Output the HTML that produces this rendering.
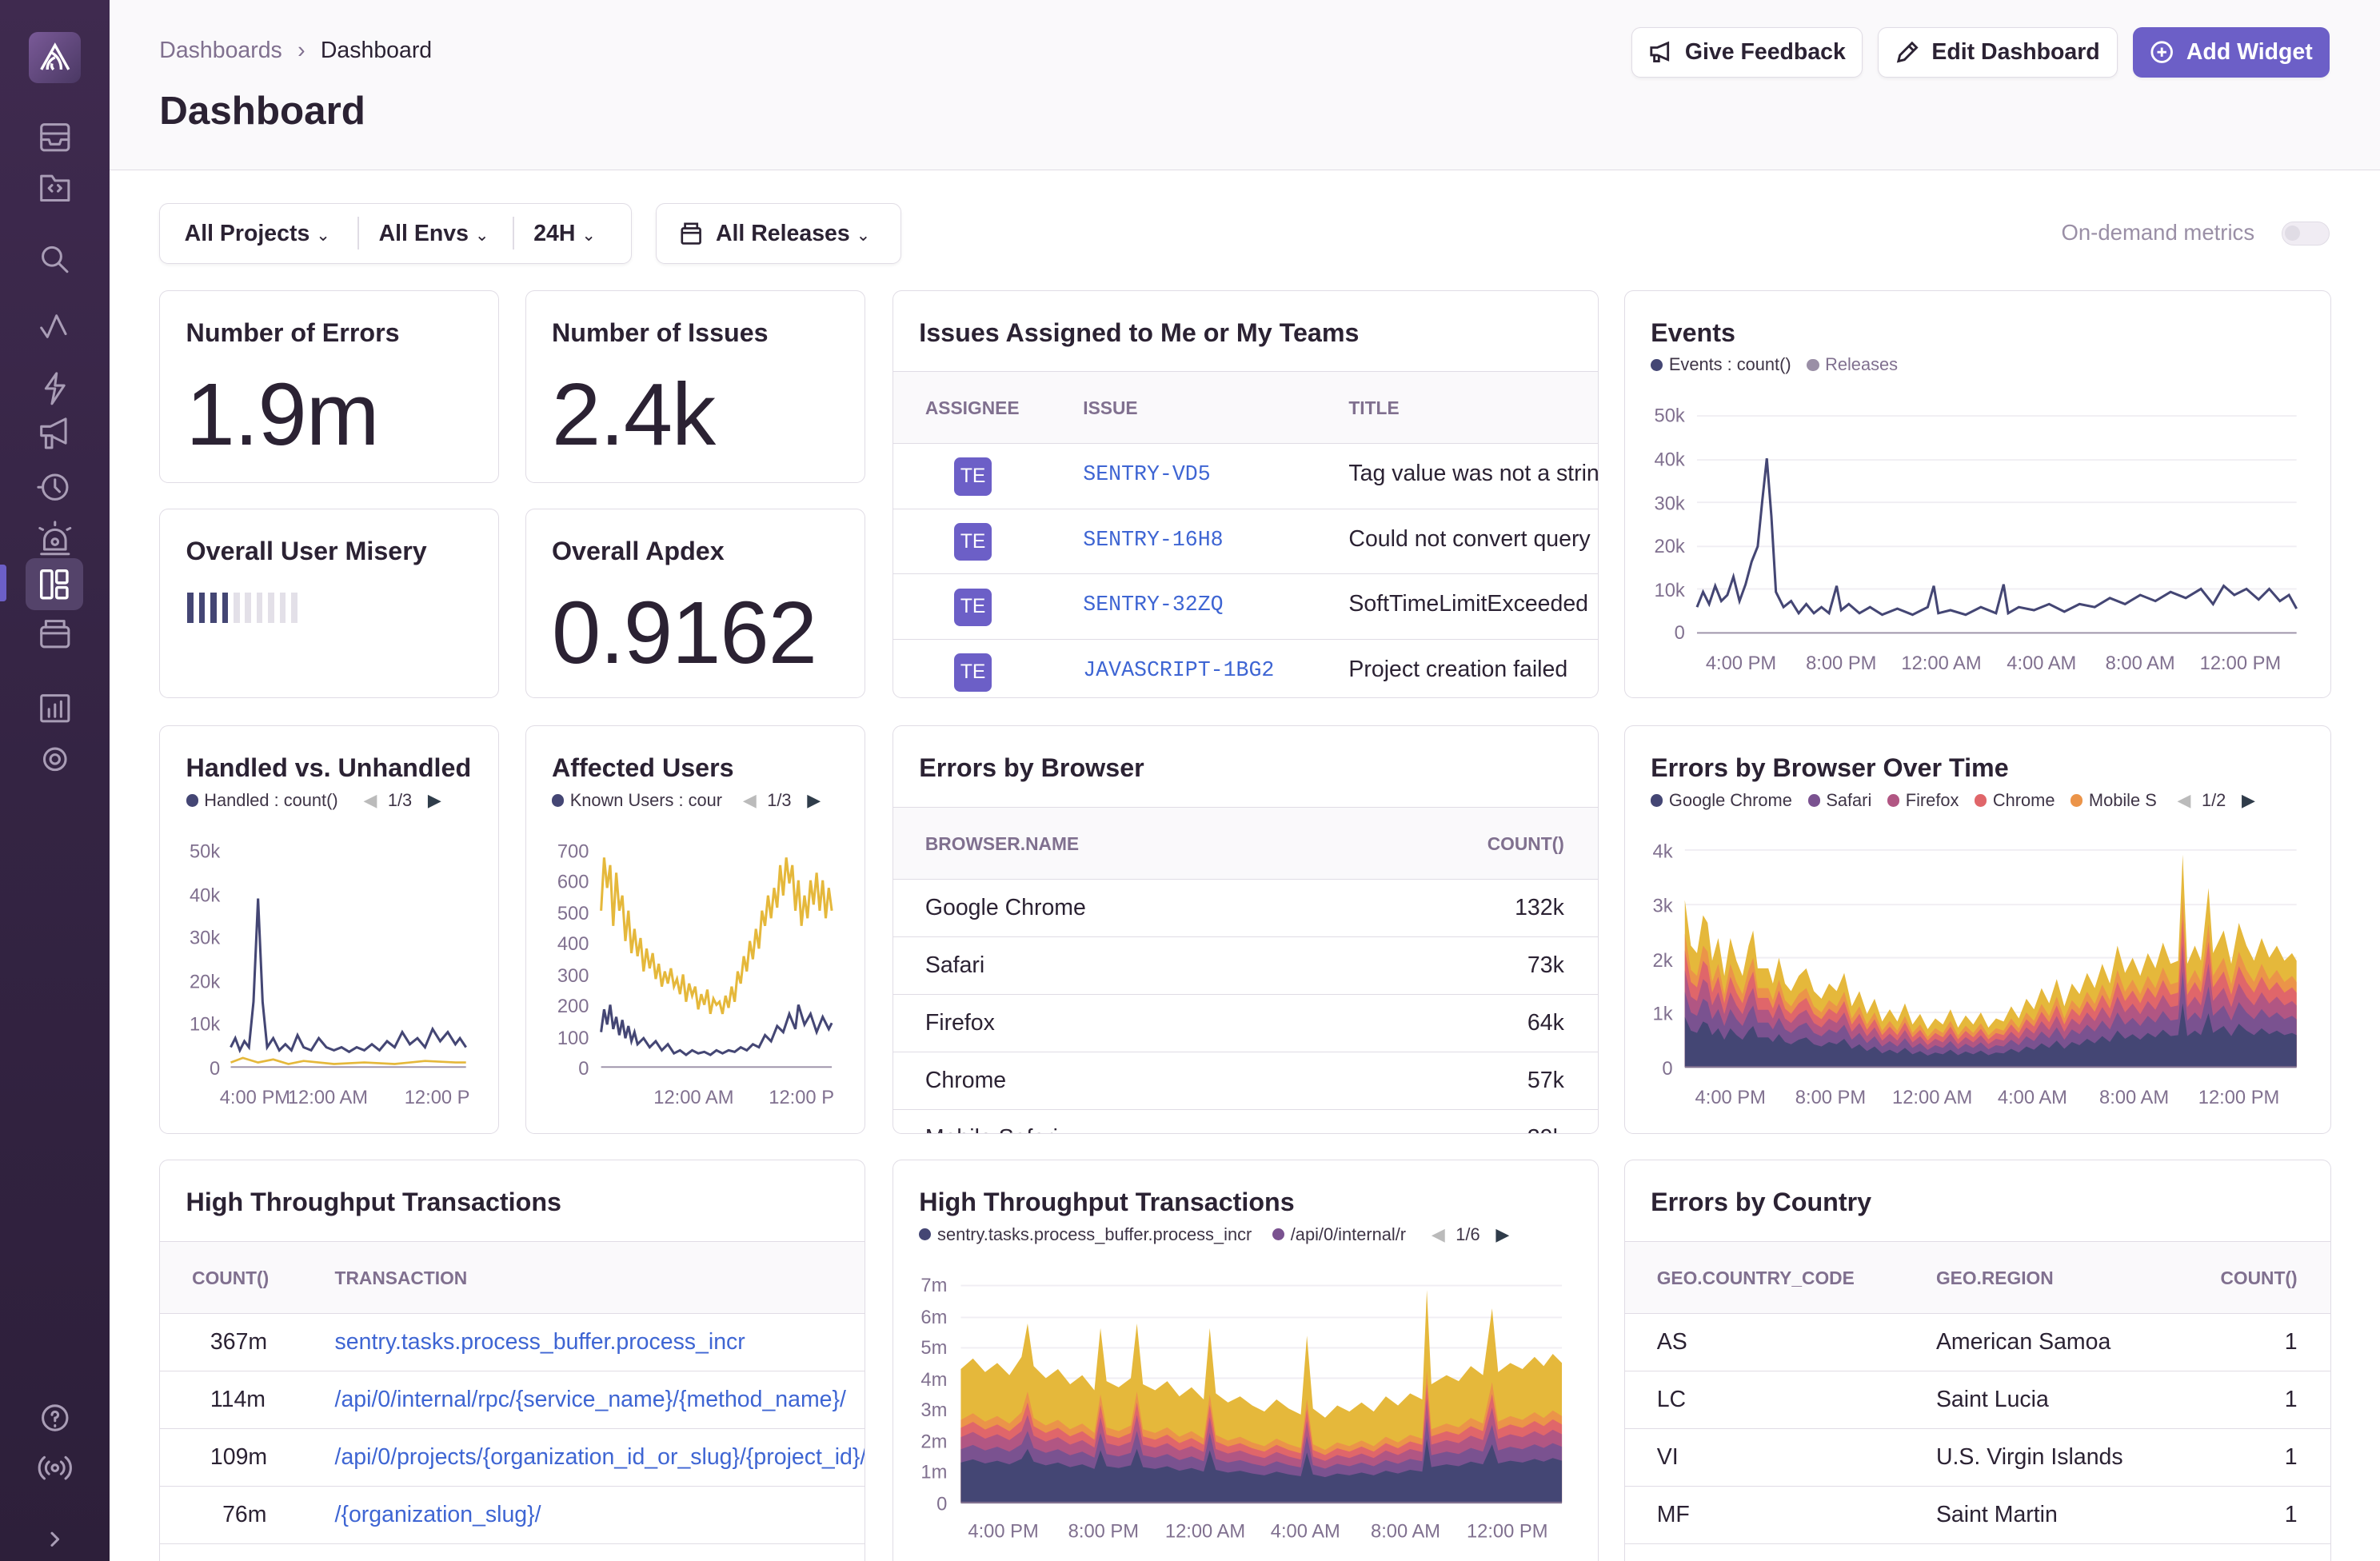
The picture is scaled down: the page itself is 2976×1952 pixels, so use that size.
<!DOCTYPE html>
<html><head><meta charset="utf-8">
<style>
*{box-sizing:border-box;margin:0;padding:0}
html,body{width:2976px;height:1952px;overflow:hidden;background:#fff}
#z{zoom:1.898;width:1568px;height:1029px;position:relative;font-family:"Liberation Sans",sans-serif;color:#2b2233;overflow:hidden}
.a{position:absolute}
.side{left:0;top:0;width:72px;height:1029px;background:linear-gradient(180deg,#3f2a4f 0%,#342443 50%,#2d1f3a 100%)}
.hdr{left:72px;top:0;width:1496px;height:112px;background:#faf9fb;border-bottom:1px solid #e0dce5}
.btn{top:18px;height:33px;border:1px solid #e0dce5;border-radius:6px;background:#fff;font-size:15px;font-weight:bold;display:flex;align-items:center;justify-content:center;gap:8px;color:#2b2233;box-shadow:0 1px 2px rgba(0,0,0,.05)}
.card{border:1px solid #e0dce5;border-radius:6px;background:#fff;overflow:hidden}
.t{font-size:17px;font-weight:bold;position:absolute;left:17px;top:18px;white-space:nowrap}
.big{position:absolute;left:17px;font-size:58px;letter-spacing:-0.5px}
.th{position:absolute;left:0;right:0;background:#faf9fb;border-top:1px solid #e0dce5;border-bottom:1px solid #e0dce5;font-size:12px;font-weight:bold;color:#80708f}
.th span,.row span{position:absolute;white-space:nowrap}
.row{position:absolute;left:0;right:0;border-bottom:1px solid #e0dce5;font-size:15px}
.te{width:25px;height:25px;background:#6c5fc7;color:#fff;border-radius:4px;font-size:13px;display:flex;align-items:center;justify-content:center}
.mono{font-family:"Liberation Mono",monospace;color:#3e65d3;font-size:14px}
.lnk{color:#3e65d3}
.lg{position:absolute;font-size:11.5px;color:#3e3446;white-space:nowrap;display:flex;align-items:center;gap:4px}
.dot{width:8px;height:8px;border-radius:50%;display:inline-block}
.ax{font-size:12.5px;fill:#80708f;font-family:"Liberation Sans",sans-serif}
.r{text-align:right}
</style></head><body><div id="z">

<div class="a side">
 <div class="a" style="left:19px;top:21px;width:34px;height:34px;border-radius:6px;background:linear-gradient(135deg,#7a5a98,#4a3863)"></div>
 <svg class="a" style="left:24px;top:26px" width="24" height="24" viewBox="0 0 24 24" fill="none" stroke="#fff" stroke-width="1.8"><path d="M3 20 L12 4 L21 20 M7 20 A8 8 0 0 1 12 12 M11 20 A4 4 0 0 1 10 16 M16 20 A12 12 0 0 0 10 9"/></svg>
 <svg class="a" style="left:24px;top:78px" width="24" height="460" viewBox="0 0 24 460" fill="none" stroke="#a99db6" stroke-width="1.6" stroke-linecap="round" stroke-linejoin="round">
  <rect x="3" y="4" width="18" height="17" rx="2"/><path d="M3 10h18M3 14h5l1 3h6l1-3h5"/>
  <path d="M3 38v16h18V41h-9l-2-3z"/><path d="M10 44l-2 2 2 2M14 44l2 2-2 2"/>
  <circle cx="10" cy="91" r="6"/><path d="M14.5 95.5L20 101"/>
  <path d="M3 138l4 6 6-14 6 12"/>
  <path d="M13 168l-7 10h6l-2 10 8-12h-6z"/>
  <path d="M3 203h6l10-5v16l-10-5H3zM6 209v8h4v-8"/>
  <circle cx="12" cy="243" r="8"/><path d="M12 238v5l3 3M4 243H1"/>
  <path d="M5 284h14v-6a7 7 0 0 0-14 0zM3 287h18M12 268v-2M4 271l-2-1M20 271l2-1"/><circle cx="12" cy="279" r="2"/>
 </svg>
 <div class="a" style="left:0;top:372px;width:4px;height:24px;background:#6c5fc7;border-radius:0 2px 2px 0"></div>
 <div class="a" style="left:17px;top:368px;width:38px;height:34px;border-radius:6px;background:#54436a"></div>
 <svg class="a" style="left:24px;top:373px" width="24" height="24" viewBox="0 0 24 24" fill="none" stroke="#fff" stroke-width="1.8"><rect x="3" y="3" width="7" height="18" rx="1"/><rect x="13" y="3" width="7" height="8" rx="1"/><rect x="13" y="14" width="7" height="7" rx="1"/></svg>
 <svg class="a" style="left:24px;top:405px" width="24" height="620" viewBox="0 0 24 620" fill="none" stroke="#a99db6" stroke-width="1.6" stroke-linecap="round" stroke-linejoin="round">
  <rect x="3" y="8" width="18" height="13" rx="2"/><path d="M6 8V4h12v4M3 12h18"/>
  <rect x="3" y="53" width="18" height="17" rx="1"/><path d="M8 67v-5M12 67v-8M16 67v-10"/>
  <circle cx="12" cy="95" r="7"/><circle cx="12" cy="95" r="3"/>
  <circle cx="12" cy="529" r="8"/><path d="M10 527a2 2 0 1 1 2 2v2M12 534v.5"/>
  <circle cx="12" cy="562" r="2"/><path d="M8 558a5 5 0 0 0 0 8M16 558a5 5 0 0 1 0 8M5 555a9 9 0 0 0 0 14M19 555a9 9 0 0 1 0 14"/>
  <path d="M10 605l4 4-4 4"/>
 </svg>
</div>

<div class="a hdr"></div>
<div class="a" style="left:105px;top:25px;font-size:15px;color:#80708f">Dashboards <span style="margin:0 6px">›</span> <span style="color:#2b2233">Dashboard</span></div>
<div class="a" style="left:105px;top:58px;font-size:26px;font-weight:bold">Dashboard</div>
<div class="a btn" style="left:1075px;width:152px"><svg width="16" height="16" viewBox="0 0 16 16" fill="none" stroke="#2b2233" stroke-width="1.5"><path d="M2 5h4l7-3v11l-7-3H2zM4 10v4h3v-4"/></svg>Give Feedback</div>
<div class="a btn" style="left:1237px;width:158px"><svg width="16" height="16" viewBox="0 0 16 16" fill="none" stroke="#2b2233" stroke-width="1.5"><path d="M2 14l1-4 8-8 3 3-8 8zM9 4l3 3"/></svg>Edit Dashboard</div>
<div class="a btn" style="left:1405px;width:130px;background:#6c5fc7;border-color:#6c5fc7;color:#fff"><svg width="16" height="16" viewBox="0 0 16 16" fill="none" stroke="#fff" stroke-width="1.5"><circle cx="8" cy="8" r="6.5"/><path d="M8 5v6M5 8h6"/></svg>Add Widget</div>

<div class="a" style="left:105px;top:134px;width:311px;height:40px;border:1px solid #e0dce5;border-radius:6px;font-size:15px;font-weight:bold;box-shadow:0 1px 2px rgba(0,0,0,.05)">
 <span class="a" style="left:16px;top:11px">All Projects <span style="font-weight:normal;font-size:11px">&#8964;</span></span>
 <div class="a" style="left:130px;top:8px;width:1px;height:22px;background:#e0dce5"></div>
 <span class="a" style="left:144px;top:11px">All Envs <span style="font-weight:normal;font-size:11px">&#8964;</span></span>
 <div class="a" style="left:232px;top:8px;width:1px;height:22px;background:#e0dce5"></div>
 <span class="a" style="left:246px;top:11px">24H <span style="font-weight:normal;font-size:11px">&#8964;</span></span>
</div>
<div class="a" style="left:432px;top:134px;width:162px;height:40px;border:1px solid #e0dce5;border-radius:6px;font-size:15px;font-weight:bold;box-shadow:0 1px 2px rgba(0,0,0,.05)">
 <svg class="a" style="left:15px;top:11px" width="16" height="16" viewBox="0 0 16 16" fill="none" stroke="#2b2233" stroke-width="1.4"><rect x="2" y="5" width="12" height="10" rx="1"/><path d="M4 5V2h8v3M2 8h12"/></svg>
 <span class="a" style="left:39px;top:11px">All Releases <span style="font-weight:normal;font-size:11px">&#8964;</span></span>
</div>
<div class="a" style="left:1358px;top:145px;font-size:14.5px;color:#9a8fa6">On-demand metrics</div>
<div class="a" style="left:1503px;top:146px;width:32px;height:16px;border-radius:8px;background:#f0ecf3;border:1px solid #e0dce5"><div style="margin:2px;width:10px;height:10px;border-radius:50%;background:#e0dce5"></div></div>

<!-- big number cards -->
<div class="a card" style="left:105px;top:191px;width:224px;height:127px"><div class="t">Number of Errors</div><div class="big" style="top:48px">1.9m</div></div>
<div class="a card" style="left:346px;top:191px;width:224px;height:127px"><div class="t">Number of Issues</div><div class="big" style="top:48px">2.4k</div></div>
<div class="a card" style="left:105px;top:335px;width:224px;height:125px"><div class="t">Overall User Misery</div>
 <div class="a" style="left:18px;top:55px;display:flex;gap:3.6px"><i style="width:4px;height:20px;background:#444674"></i><i style="width:4px;height:20px;background:#444674"></i><i style="width:4px;height:20px;background:#444674"></i><i style="width:4px;height:20px;background:#444674"></i><i style="width:4px;height:20px;background:#e3e0e8"></i><i style="width:4px;height:20px;background:#e3e0e8"></i><i style="width:4px;height:20px;background:#e3e0e8"></i><i style="width:4px;height:20px;background:#e3e0e8"></i><i style="width:4px;height:20px;background:#e3e0e8"></i><i style="width:4px;height:20px;background:#e3e0e8"></i></div></div>
<div class="a card" style="left:346px;top:335px;width:224px;height:125px"><div class="t">Overall Apdex</div><div class="big" style="top:48px">0.9162</div></div>

<!-- issues -->
<div class="a card" style="left:588px;top:191px;width:465px;height:269px"><div class="t">Issues Assigned to Me or My Teams</div>
 <div class="th" style="top:53px;height:48px"><span style="left:21px;top:17px">ASSIGNEE</span><span style="left:125px;top:17px">ISSUE</span><span style="left:300px;top:17px">TITLE</span></div>
 <div class="row" style="top:101px;height:43px"><span style="left:40px;top:9px" class="te">TE</span><span class="mono" style="left:125px;top:12px">SENTRY-VD5</span><span style="left:300px;top:11px">Tag value was not a string</span></div>
 <div class="row" style="top:144px;height:43px"><span style="left:40px;top:9px" class="te">TE</span><span class="mono" style="left:125px;top:12px">SENTRY-16H8</span><span style="left:300px;top:11px">Could not convert query</span></div>
 <div class="row" style="top:187px;height:43px"><span style="left:40px;top:9px" class="te">TE</span><span class="mono" style="left:125px;top:12px">SENTRY-32ZQ</span><span style="left:300px;top:11px">SoftTimeLimitExceeded</span></div>
 <div class="row" style="top:230px;height:43px;border:0"><span style="left:40px;top:9px" class="te">TE</span><span class="mono" style="left:125px;top:12px">JAVASCRIPT-1BG2</span><span style="left:300px;top:11px">Project creation failed</span></div>
</div>

<!-- events -->
<div class="a card" style="left:1070px;top:191px;width:466px;height:269px"><div class="t">Events</div>
 <div class="lg" style="left:17px;top:42px"><i class="dot" style="background:#444674"></i>Events : count()&nbsp;&nbsp;<i class="dot" style="background:#9a8fa6"></i><span style="color:#80708f">Releases</span></div></div>

<!-- row3 -->
<div class="a card" style="left:105px;top:478px;width:224px;height:269px"><div class="t">Handled vs. Unhandled</div>
 <div class="lg" style="left:17px;top:42px"><i class="dot" style="background:#444674"></i>Handled : count()&nbsp;&nbsp;&nbsp;&nbsp;<span style="color:#bbb">◀</span>&nbsp;1/3&nbsp;&nbsp;<span style="color:#2f3c4a">▶</span></div></div>
<div class="a card" style="left:346px;top:478px;width:224px;height:269px"><div class="t">Affected Users</div>
 <div class="lg" style="left:17px;top:42px"><i class="dot" style="background:#444674"></i>Known Users : cour&nbsp;&nbsp;&nbsp;<span style="color:#bbb">◀</span>&nbsp;1/3&nbsp;&nbsp;<span style="color:#2f3c4a">▶</span></div></div>
<div class="a card" style="left:588px;top:478px;width:465px;height:269px"><div class="t">Errors by Browser</div>
 <div class="th" style="top:53px;height:48px"><span style="left:21px;top:17px">BROWSER.NAME</span><span style="right:22px;top:17px">COUNT()</span></div>
 <div class="row" style="top:101px;height:38px"><span style="left:21px;top:10px">Google Chrome</span><span style="right:22px;top:10px">132k</span></div>
 <div class="row" style="top:139px;height:38px"><span style="left:21px;top:10px">Safari</span><span style="right:22px;top:10px">73k</span></div>
 <div class="row" style="top:177px;height:38px"><span style="left:21px;top:10px">Firefox</span><span style="right:22px;top:10px">64k</span></div>
 <div class="row" style="top:215px;height:38px"><span style="left:21px;top:10px">Chrome</span><span style="right:22px;top:10px">57k</span></div>
 <div class="row" style="top:253px;height:38px;border:0"><span style="left:21px;top:10px">Mobile Safari</span><span style="right:22px;top:10px">39k</span></div>
</div>
<div class="a card" style="left:1070px;top:478px;width:466px;height:269px"><div class="t">Errors by Browser Over Time</div>
 <div class="lg" style="left:17px;top:42px"><i class="dot" style="background:#444674"></i>Google Chrome&nbsp;&nbsp;<i class="dot" style="background:#7a5290"></i>Safari&nbsp;&nbsp;<i class="dot" style="background:#b15683"></i>Firefox&nbsp;&nbsp;<i class="dot" style="background:#e0666a"></i>Chrome&nbsp;&nbsp;<i class="dot" style="background:#eb9449"></i>Mobile S&nbsp;&nbsp;&nbsp;<span style="color:#bbb">◀</span>&nbsp;1/2&nbsp;&nbsp;<span style="color:#2f3c4a">▶</span></div></div>

<!-- row4 -->
<div class="a card" style="left:105px;top:764px;width:465px;height:280px"><div class="t">High Throughput Transactions</div>
 <div class="th" style="top:53px;height:48px"><span style="left:21px;top:17px">COUNT()</span><span style="left:115px;top:17px">TRANSACTION</span></div>
 <div class="row" style="top:101px;height:38px"><span style="left:33px;top:10px">367m</span><span class="lnk" style="left:115px;top:10px">sentry.tasks.process_buffer.process_incr</span></div>
 <div class="row" style="top:139px;height:38px"><span style="left:33px;top:10px">114m</span><span class="lnk" style="left:115px;top:10px">/api/0/internal/rpc/{service_name}/{method_name}/</span></div>
 <div class="row" style="top:177px;height:38px"><span style="left:33px;top:10px">109m</span><span class="lnk" style="left:115px;top:10px">/api/0/projects/{organization_id_or_slug}/{project_id}/</span></div>
 <div class="row" style="top:215px;height:38px"><span style="left:41px;top:10px">76m</span><span class="lnk" style="left:115px;top:10px">/{organization_slug}/</span></div>
</div>
<div class="a card" style="left:588px;top:764px;width:465px;height:280px"><div class="t">High Throughput Transactions</div>
 <div class="lg" style="left:17px;top:42px"><i class="dot" style="background:#444674"></i>sentry.tasks.process_buffer.process_incr&nbsp;&nbsp;&nbsp;<i class="dot" style="background:#7a5290"></i>/api/0/internal/r&nbsp;&nbsp;&nbsp;&nbsp;<span style="color:#bbb">◀</span>&nbsp;1/6&nbsp;&nbsp;<span style="color:#2f3c4a">▶</span></div></div>
<div class="a card" style="left:1070px;top:764px;width:466px;height:280px"><div class="t">Errors by Country</div>
 <div class="th" style="top:53px;height:48px"><span style="left:21px;top:17px">GEO.COUNTRY_CODE</span><span style="left:205px;top:17px">GEO.REGION</span><span style="right:22px;top:17px">COUNT()</span></div>
 <div class="row" style="top:101px;height:38px"><span style="left:21px;top:10px">AS</span><span style="left:205px;top:10px">American Samoa</span><span style="right:22px;top:10px">1</span></div>
 <div class="row" style="top:139px;height:38px"><span style="left:21px;top:10px">LC</span><span style="left:205px;top:10px">Saint Lucia</span><span style="right:22px;top:10px">1</span></div>
 <div class="row" style="top:177px;height:38px"><span style="left:21px;top:10px">VI</span><span style="left:205px;top:10px">U.S. Virgin Islands</span><span style="right:22px;top:10px">1</span></div>
 <div class="row" style="top:215px;height:38px"><span style="left:21px;top:10px">MF</span><span style="left:205px;top:10px">Saint Martin</span><span style="right:22px;top:10px">1</span></div>
</div>

<!-- charts overlay -->
<svg class="a" style="left:0;top:0" width="1568" height="1029" viewBox="0 0 1568 1029">
<defs>
 <path id="bt" d="M0 0V-110L4 -80L8 -75L12 -100L15 -95L18 -70L22 -85L26 -60L30 -85L34 -70L38 -60L42 -80L45 -90L48 -65L55 -65L58 -55L62 -72L66 -55L70 -50L75 -60L80 -65L85 -50L90 -45L95 -55L100 -50L105 -62L110 -40L115 -50L120 -35L125 -45L130 -30L135 -38L140 -30L145 -42L150 -28L155 -35L160 -25L165 -32L170 -28L175 -38L180 -26L185 -34L190 -28L195 -36L200 -26L205 -32L210 -30L215 -40L220 -32L225 -45L230 -38L235 -52L240 -42L245 -58L250 -40L255 -55L260 -48L265 -62L270 -52L275 -68L280 -55L285 -80L290 -62L295 -72L300 -60L305 -75L310 -65L315 -82L320 -68L325 -70L328 -140L331 -68L336 -80L340 -70L345 -118L348 -75L355 -90L360 -68L365 -95L370 -80L375 -70L380 -85L385 -72L390 -80L395 -70L400 -75L403 -70V0Z"/>
 <path id="ht" d="M0 0V-88L8 -95L16 -86L24 -92L32 -84L40 -96L44 -118L48 -90L56 -82L64 -88L72 -78L80 -84L88 -74L92 -115L96 -80L104 -76L112 -82L116 -118L120 -78L128 -74L136 -80L144 -70L152 -76L160 -68L164 -115L168 -72L176 -66L184 -70L192 -64L200 -60L208 -68L216 -62L224 -58L228 -110L232 -62L240 -56L248 -64L256 -60L264 -66L272 -60L280 -70L288 -64L296 -72L304 -68L307 -140L310 -78L320 -84L328 -80L336 -90L344 -84L350 -128L354 -86L362 -92L370 -88L378 -96L384 -90L390 -98L396 -92V0Z"/>
</defs>
<!-- events -->
<g class="ax"><text x="1110" y="278" text-anchor="end">50k</text><text x="1110" y="307" text-anchor="end">40k</text><text x="1110" y="336" text-anchor="end">30k</text><text x="1110" y="364" text-anchor="end">20k</text><text x="1110" y="393" text-anchor="end">10k</text><text x="1110" y="421" text-anchor="end">0</text>
<text x="1147" y="441" text-anchor="middle">4:00 PM</text><text x="1213" y="441" text-anchor="middle">8:00 PM</text><text x="1279" y="441" text-anchor="middle">12:00 AM</text><text x="1345" y="441" text-anchor="middle">4:00 AM</text><text x="1410" y="441" text-anchor="middle">8:00 AM</text><text x="1476" y="441" text-anchor="middle">12:00 PM</text></g>
<g stroke="#f0eef3" stroke-width="1"><path d="M1118 274H1513M1118 303H1513M1118 331H1513M1118 360H1513M1118 388H1513"/></g>
<path d="M1118 417H1513" stroke="#9a8fa6"/>
<polyline fill="none" stroke="#444674" stroke-width="1.6" points="1118,400 1122,390 1126,398 1130,386 1134,396 1138,392 1142,380 1146,396 1150,385 1154,370 1158,360 1161,330 1164,302 1167,340 1170,390 1175,400 1180,396 1185,404 1190,398 1195,404 1200,400 1205,404 1210,386 1213,402 1218,398 1225,404 1232,400 1240,405 1250,401 1260,405 1270,400 1274,386 1277,404 1285,402 1295,405 1305,400 1315,404 1320,385 1323,404 1330,400 1340,402 1350,398 1360,403 1370,398 1380,400 1390,394 1400,398 1410,392 1420,396 1430,390 1440,394 1450,388 1458,398 1465,386 1472,392 1480,388 1488,395 1495,388 1502,396 1508,392 1513,401"/>
<!-- handled -->
<g class="ax"><text x="145" y="565" text-anchor="end">50k</text><text x="145" y="594" text-anchor="end">40k</text><text x="145" y="622" text-anchor="end">30k</text><text x="145" y="651" text-anchor="end">20k</text><text x="145" y="679" text-anchor="end">10k</text><text x="145" y="708" text-anchor="end">0</text>
<text x="168" y="727" text-anchor="middle">4:00 PM</text><text x="216" y="727" text-anchor="middle">12:00 AM</text><text x="288" y="727" text-anchor="middle">12:00 P</text></g>
<path d="M152 703H307" stroke="#9a8fa6"/>
<polyline fill="none" stroke="#444674" stroke-width="1.6" points="152,690 155,684 158,692 161,686 164,690 167,660 170,592 173,660 176,690 180,684 184,692 188,688 192,692 196,682 200,690 205,692 210,684 215,690 220,692 225,690 230,693 235,690 240,692 245,688 250,692 255,686 260,690 265,680 270,688 275,684 280,690 285,678 290,686 295,680 300,688 303,684 307,690"/>
<polyline fill="none" stroke="#e5b83b" stroke-width="1.4" points="152,700 160,697 170,700 180,698 190,701 200,699 220,701 240,700 260,701 280,699 300,700 307,700"/>
<!-- affected -->
<g class="ax"><text x="388" y="565" text-anchor="end">700</text><text x="388" y="585" text-anchor="end">600</text><text x="388" y="606" text-anchor="end">500</text><text x="388" y="626" text-anchor="end">400</text><text x="388" y="647" text-anchor="end">300</text><text x="388" y="667" text-anchor="end">200</text><text x="388" y="688" text-anchor="end">100</text><text x="388" y="708" text-anchor="end">0</text>
<text x="457" y="727" text-anchor="middle">12:00 AM</text><text x="528" y="727" text-anchor="middle">12:00 P</text></g>
<path d="M396 703H548" stroke="#9a8fa6"/>
<polyline fill="none" stroke="#e5b83b" stroke-width="1.6" points="396,600 398,565 400,585 402,570 404,610 406,575 408,600 410,590 412,620 414,600 416,628 418,612 420,630 422,618 424,640 426,625 428,638 430,628 432,645 434,635 436,650 438,640 440,648 442,638 444,650 446,645 448,655 450,642 452,660 454,648 456,656 458,650 460,665 462,655 464,662 466,652 468,668 470,658 472,662 474,660 476,668 478,656 480,664 482,650 484,660 486,640 488,648 490,630 492,640 494,620 496,632 498,612 500,625 502,600 504,610 506,590 508,605 510,585 512,598 514,570 516,590 518,565 520,582 522,570 524,600 526,580 528,610 530,590 532,605 534,580 536,596 538,575 540,600 542,580 544,605 546,585 548,600"/>
<polyline fill="none" stroke="#444674" stroke-width="1.6" points="396,680 398,665 400,675 402,662 404,678 406,670 408,682 410,672 412,684 414,676 416,686 418,680 420,688 424,684 428,690 432,686 436,692 440,688 444,694 448,692 452,695 456,692 460,694 464,693 468,695 472,692 476,694 480,692 484,693 488,690 492,692 496,688 500,690 504,682 508,686 512,676 516,680 520,668 524,678 526,662 530,675 534,668 538,680 542,670 546,678 548,674"/>
<!-- errors over time -->
<g class="ax"><text x="1102" y="565" text-anchor="end">4k</text><text x="1102" y="601" text-anchor="end">3k</text><text x="1102" y="637" text-anchor="end">2k</text><text x="1102" y="672" text-anchor="end">1k</text><text x="1102" y="708" text-anchor="end">0</text>
<text x="1140" y="727" text-anchor="middle">4:00 PM</text><text x="1206" y="727" text-anchor="middle">8:00 PM</text><text x="1273" y="727" text-anchor="middle">12:00 AM</text><text x="1339" y="727" text-anchor="middle">4:00 AM</text><text x="1406" y="727" text-anchor="middle">8:00 AM</text><text x="1475" y="727" text-anchor="middle">12:00 PM</text></g>
<g stroke="#f0eef3"><path d="M1110 560H1513M1110 596H1513M1110 631H1513M1110 667H1513"/></g>
<g transform="translate(1110,703)">
 <use href="#bt" fill="#e5b83b"/>
 <use href="#bt" fill="#eb9449" transform="scale(1,0.8)"/>
 <use href="#bt" fill="#e0666a" transform="scale(1,0.7)"/>
 <use href="#bt" fill="#b15683" transform="scale(1,0.58)"/>
 <use href="#bt" fill="#7a5290" transform="scale(1,0.45)"/>
 <use href="#bt" fill="#444674" transform="scale(1,0.3)"/>
</g>
<path d="M1110 703H1513" stroke="#80708f" stroke-width="1.2"/>
<!-- htt chart -->
<g class="ax"><text x="624" y="851" text-anchor="end">7m</text><text x="624" y="872" text-anchor="end">6m</text><text x="624" y="892" text-anchor="end">5m</text><text x="624" y="913" text-anchor="end">4m</text><text x="624" y="933" text-anchor="end">3m</text><text x="624" y="954" text-anchor="end">2m</text><text x="624" y="974" text-anchor="end">1m</text><text x="624" y="995" text-anchor="end">0</text>
<text x="661" y="1013" text-anchor="middle">4:00 PM</text><text x="727" y="1013" text-anchor="middle">8:00 PM</text><text x="794" y="1013" text-anchor="middle">12:00 AM</text><text x="860" y="1013" text-anchor="middle">4:00 AM</text><text x="926" y="1013" text-anchor="middle">8:00 AM</text><text x="993" y="1013" text-anchor="middle">12:00 PM</text></g>
<g stroke="#f0eef3"><path d="M633 847H1029M633 868H1029M633 888H1029M633 908H1029"/></g>
<g transform="translate(633,990)">
 <use href="#ht" fill="#e5b83b"/>
 <use href="#ht" fill="#eb9449" transform="scale(1,0.62)"/>
 <use href="#ht" fill="#e0666a" transform="scale(1,0.56)"/>
 <use href="#ht" fill="#b15683" transform="scale(1,0.49)"/>
 <use href="#ht" fill="#7a5290" transform="scale(1,0.4)"/>
 <use href="#ht" fill="#444674" transform="scale(1,0.3)"/>
</g>
<path d="M633 990H1029" stroke="#80708f" stroke-width="1.2"/>
</svg>
</div></body></html>
